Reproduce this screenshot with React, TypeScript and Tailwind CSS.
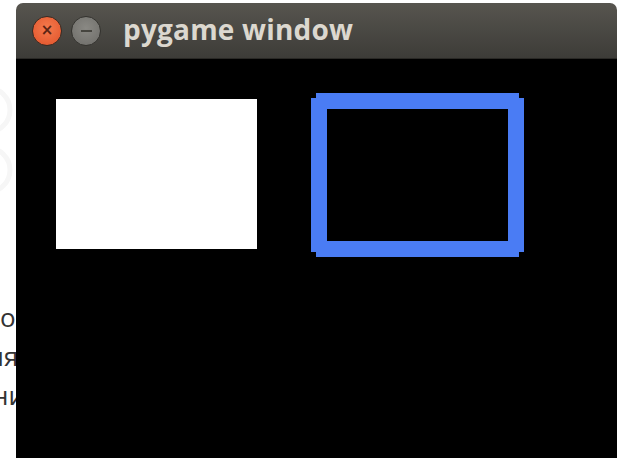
import React from 'react';

// Thick outline drawn like pygame.draw.rect(width=16): square notches at the corners
const OutlineRect: React.FC<{ w: number; h: number; t: number; notch: number; color: string }> = ({ w, h, t, notch, color }) => {
  const n = notch;
  const outer = `M${n} 0 H${w - n} V${n} H${w} V${h - n} H${w - n} V${h} H${n} V${h - n} H0 V${n} H${n} Z`;
  const inner = `M${t} ${t} H${w - t} V${h - t} H${t} Z`;
  return (
    <svg width={w} height={h} viewBox={`0 0 ${w} ${h}`}>
      <path d={`${outer} ${inner}`} fill={color} fillRule="evenodd" />
    </svg>
  );
};

const TitleBar: React.FC<{ title: string }> = ({ title }) => (
  <div className="h-[56px] flex items-center rounded-t-[7px] bg-gradient-to-b from-[#57554f] to-[#3d3c38] border-b border-[#2a2926]">
    <div className="flex items-center gap-[9px] pl-[16px]">
      <div className="w-[30px] h-[30px] rounded-full bg-[radial-gradient(circle_at_50%_40%,#f57a4c,#e0522a)] border border-[#3a2a22] flex items-center justify-center">
        <span className="text-[#5c2414] text-[15px] font-bold leading-none" style={{ fontFamily: '"DejaVu Sans", sans-serif' }}>
          ×
        </span>
      </div>
      <div className="w-[30px] h-[30px] rounded-full bg-[radial-gradient(circle_at_50%_40%,#8a8984,#6d6c68)] border border-[#34332f] flex items-center justify-center">
        <div className="w-[11px] h-[2px] bg-[#46453f]" />
      </div>
    </div>
    <span
      className="ml-[22px] text-[#dcd8cf] text-[28px] font-bold tracking-[0.2px] leading-none pb-[4px]"
      style={{ fontFamily: '"Open Sans", "DejaVu Sans", sans-serif' }}
    >
      {title}
    </span>
  </div>
);

export default function App() {
  return (
    <div className="w-[620px] h-[458px] bg-white flex overflow-hidden" style={{ fontFamily: '"Open Sans", sans-serif' }}>
      {/* page text behind the window */}
      <div className="w-[16px] shrink-0 relative overflow-hidden">
        <svg className="absolute left-[-42px] top-[70px]" width="60" height="140" viewBox="0 0 60 140">
          <circle cx="30" cy="40" r="22" fill="none" stroke="#f6f6f6" strokeWidth="5" />
          <circle cx="30" cy="100" r="22" fill="none" stroke="#f6f6f6" strokeWidth="5" />
        </svg>
        <div className="pt-[298px] flex flex-col text-[#333333] text-[26px] leading-[39px] whitespace-nowrap">
          <div className="ml-0">о</div>
          <div className="ml-[-11px]">ля</div>
          <div className="ml-[-8px]">ни</div>
        </div>
      </div>

      {/* pygame window */}
      <div className="w-[601px] shrink-0 mt-[3px] flex flex-col">
        <TitleBar title="pygame window" />
        <div className="flex-1 bg-black relative">
          <div className="absolute left-[40px] top-[40px] w-[201px] h-[150px] bg-white" />
          <div className="absolute left-[295px] top-[34px]">
            <OutlineRect w={213} h={164} t={16} notch={5} color="#4a7cf4" />
          </div>
        </div>
      </div>
    </div>
  );
}
